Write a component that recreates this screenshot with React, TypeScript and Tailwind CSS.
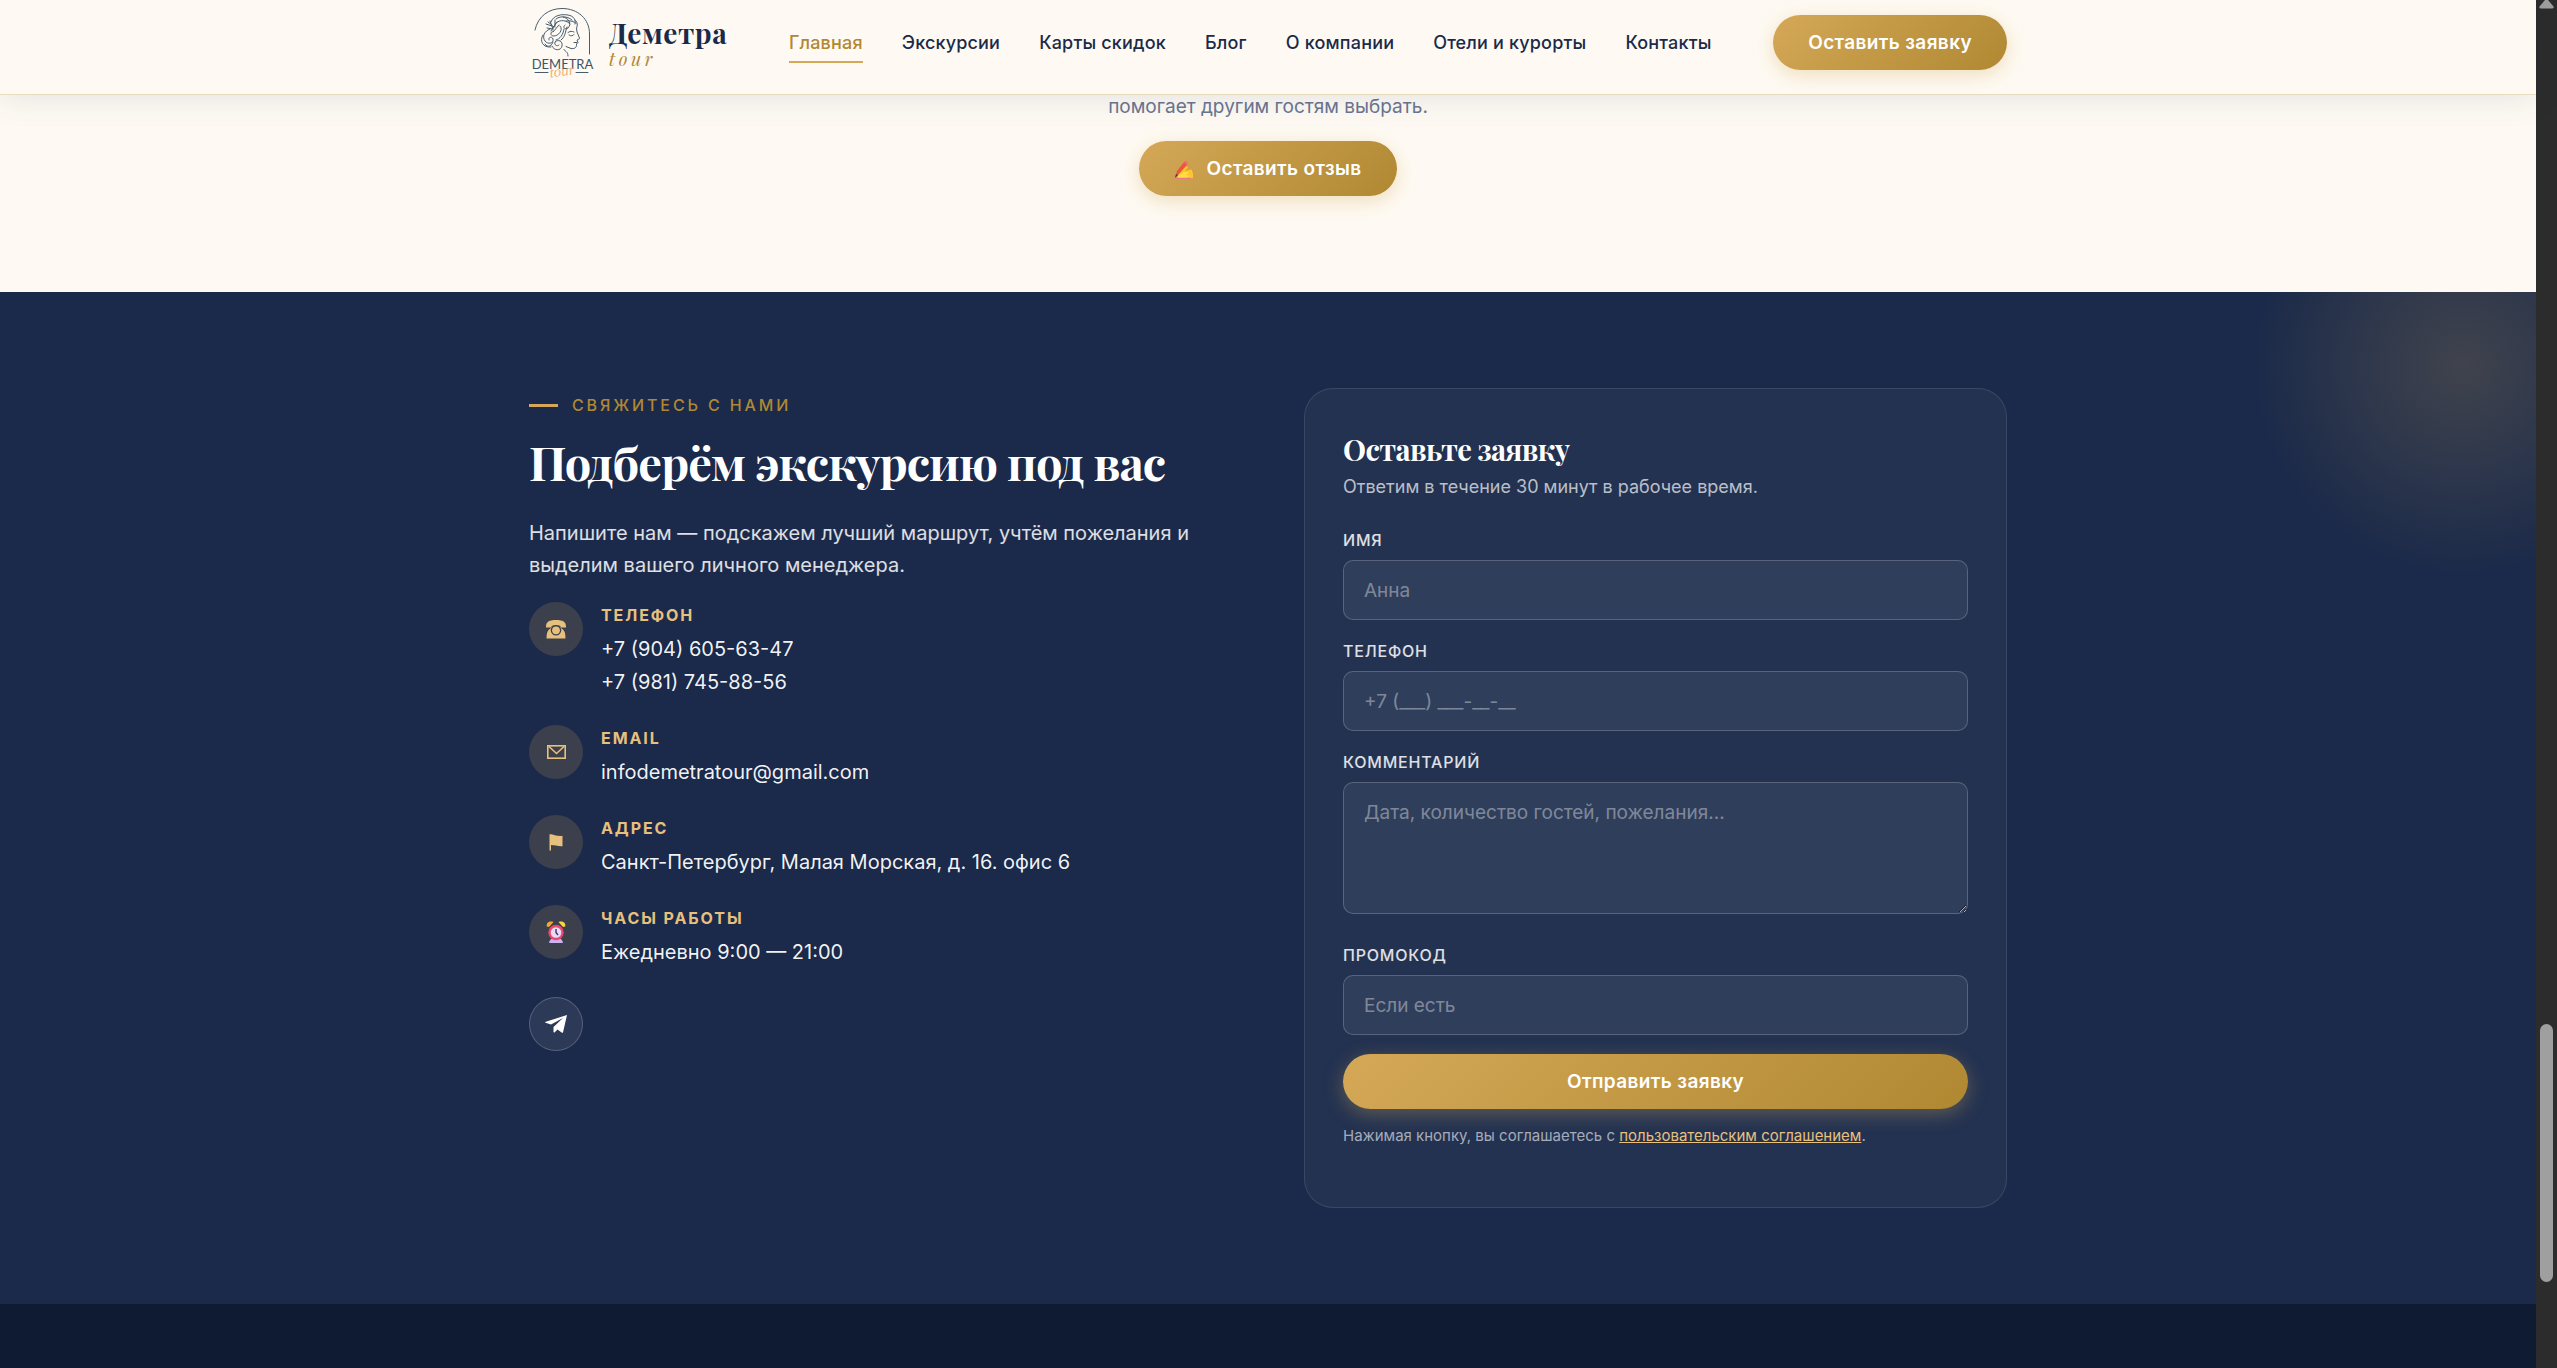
import React from "react";

const SANS = "font-['Inter','Noto_Sans',sans-serif]";
const SERIF = "font-['Playfair_Display','Liberation_Serif',serif]";

const NAV = ["Главная", "Экскурсии", "Карты скидок", "Блог", "О компании", "Отели и курорты", "Контакты"];

const GOLD_BUTTON =
  "inline-flex h-[55px] cursor-pointer items-center justify-center rounded-full bg-[linear-gradient(135deg,#d4a857,#b08832)] px-[35px] pt-0.5 text-[19px] font-semibold tracking-[0.02em] text-white shadow-[0_5px_19px_rgba(212,168,87,0.35)]";

function LogoMark() {
  return (
    <svg viewBox="0 0 64 84" className="h-[84px] w-16" fill="none" stroke="#465d70" strokeLinecap="round" strokeLinejoin="round" strokeWidth="1" aria-hidden="true">
      <path d="M4 30C7 16 18 8.500 31 8.500C47 8.500 58.500 19 58.500 34V54" />
      <path d="M20 22C22 15 31 14 37 15C43 16 45 20 44 24" />
      <path d="M25 19C30 15 38 17 41 20M32 17C38 18 41 24 37 28C34 30 31 27 34 25" />
      <path d="M24 24C29 18 37 21 39 24M35 21C40 20 43 22 45 23" />
      <path d="M44 20C47 22 46.500 26 45.500 28L46 32L48.500 38C48.500 39.500 47 39.500 46 40L47 42.500L45.500 44C46 48 43 49 40 48.500L35 46.500" />
      <path d="M37 32.500C39 31 41 31 43 32M38 35C40 36.500 42 36 43 34.500M43 42.500H46" />
      <path d="M33 49.500C34 52 37 51 37 56" />
      <path d="M19 21L22 29M15 24L24 27M17 22L21 25M26 22L20 31M28 25L22 32M16 28L22 29M24 20L24 26" />
      <path d="M29 26C33 30 27 36 23 36C19 36 19 32 22 31M33 29C32 35 29 39 25 40" />
      <path d="M19 29C13 31 11 37 14 41C17 45 23 43 22 39C21 36 17 37 18 40" />
      <path d="M12 35C8 41 12 48 20 47M21 46C23 51 30 51 31 46C32 41 27 39 24 42C23 45 26 47 28 45" />
      <path d="M14 44C17 49 21 45 22 42M36 27C34 33 34 37 30 40" />
      <text x="31.5" y="69" textAnchor="middle" fontFamily="Lato, sans-serif" fontSize="13" fill="#3d5366" stroke="none">DEMETRA</text>
      <path d="M4 72.500H17M45 72.500H57" />
      <text x="31" y="76" textAnchor="middle" fontFamily="Liberation Serif, serif" fontStyle="italic" fontSize="15" fill="#f4b073" stroke="none" transform="rotate(-8 31 72)">tour</text>
    </svg>
  );
}

function WritingHand() {
  return (
    <svg viewBox="0 0 20 20" className="size-5" aria-hidden="true">
      <path d="M8 9L12 5.500L14 7.500L11 11L17 9.500Q19 10 18 12L19 13V18L13 19L4 18.500L3 16Z" fill="#fcc52c" />
      <path d="M4 16L10 12L15 12L12 15L16 16L12 18L4 18Z" fill="#ffdf3d" />
      <path d="M1 18L3 11L11 1L14 2.500L13 5L4 15Z" fill="#ef5340" />
      <path d="M10 2L12 .5L14 2L13 5Z" fill="#f4707e" />
      <path d="M1 18L2 14L4 15Z" fill="#4a3b3b" />
      <path d="M2 18.500H17" stroke="#e8788a" strokeWidth="1.500" />
    </svg>
  );
}

function PhoneIcon() {
  return (
    <svg viewBox="0 0 22 20" className="h-5 w-[22px]" fill="#e8c07d" aria-hidden="true">
      <path d="M1 7.500C1 3 4 1 11 1S21 3 21 7.500V8.500H15.500V7C14 5.500 8 5.500 6.500 7V8.500H1Z" />
      <path fillRule="evenodd" d="M5.500 9.500C7 7 9 6 11 6S15 7 16.500 9.500Q20.500 11 20.500 19.500H1.500Q1.500 11 5.500 9.500ZM11 6A5.300 5.300 0 1 0 11 16.600A5.300 5.300 0 1 0 11 6Z" />
      <circle cx="11" cy="11.300" r="3.900" />
    </svg>
  );
}

function MailIcon() {
  return (
    <svg viewBox="0 0 19 14" className="h-[14px] w-[19px]" fill="none" stroke="#e8c07d" strokeWidth="1.600" aria-hidden="true">
      <rect x=".8" y=".8" width="17.400" height="12.400" />
      <path d="M2 1.500L9.500 8.500L17 1.500" />
    </svg>
  );
}

function FlagIcon() {
  return (
    <svg viewBox="0 0 14 17" className="h-[17px] w-[14px]" fill="#e8c07d" aria-hidden="true">
      <path d="M.5 .2H2C6 1 9 2.500 13.500 1.800V12.200C9 12.500 6 11 2 11V16.500H.5Z" />
    </svg>
  );
}

function ClockIcon() {
  return (
    <svg viewBox="0 0 20 24" className="h-6 w-5" aria-hidden="true">
      <path d="M3 22L5 19H15L17 22Q17 23 16 23H4Q3 23 3 22Z" fill="#cdb2ee" />
      <path d="M.8 6.500C0 3 3 .5 7.500 2L3 7Z" fill="#f0a83a" />
      <path d="M19.200 6.500C20 3 17 .5 12.500 2L17 7Z" fill="#ffd43a" />
      <circle cx="10" cy="12.500" r="7.700" fill="#f0476d" />
      <circle cx="10" cy="12.500" r="5.300" fill="#e9dcf8" />
      <path d="M10 9V12.500L12 15" stroke="#42345c" strokeWidth="1.400" fill="none" />
    </svg>
  );
}

function TelegramIcon() {
  return (
    <svg viewBox="0 0 22 18" className="h-[18px] w-[22px]" fill="#fff" aria-hidden="true">
      <path d="M22 0L18 17.500Q17.500 18 17 17.700L12.500 14.500L9.500 17.500Q8.500 17.800 8.500 16.500V12L18 3L6 9.500L.5 7.800Q-.3 7 .8 6.700Z" />
    </svg>
  );
}

const CONTACTS = [
  { label: "Телефон", icon: <PhoneIcon />, values: [["+7 (904) 605-63-47", "tel:+79046056347"], ["+7 (981) 745-88-56", "tel:+79817458856"]] },
  { label: "Email", icon: <MailIcon />, values: [["infodemetratour@gmail.com", "mailto:infodemetratour@gmail.com"]] },
  { label: "Адрес", icon: <FlagIcon />, values: [["Санкт-Петербург, Малая Морская, д. 16. офис 6", ""]] },
  { label: "Часы работы", icon: <ClockIcon />, values: [["Ежедневно 9:00 — 21:00", ""]] },
];

const LABEL = "block text-[16px] leading-6 font-medium tracking-[0.05em] text-white/85 uppercase";
const FIELD =
  "mt-2 block w-full rounded-[10px] border border-white/20 bg-white/[0.06] px-5 text-[19px] text-white outline-none placeholder:text-white/40";

function Header() {
  return (
    <header className="relative z-10 h-[95px] border-b border-[#e8dcc0] bg-[#fefaf3] shadow-[0_5px_29px_rgba(27,42,74,0.1)]">
      <div className="mx-auto flex w-full max-w-[1478px] items-start justify-between">
        <a href="#" className="flex items-start gap-[14px] pl-[2px]">
          <LogoMark />
          <span className="flex flex-col pt-[17px]">
            <span className={`${SERIF} text-[28px] leading-8 font-bold tracking-[0.02em] text-[#1b2a4a]`}>Деметра</span>
            <span className={`${SERIF} text-[18px] leading-5 tracking-[0.2em] text-[#b08832] italic`}>tour</span>
          </span>
        </a>
        <nav className="flex gap-[39px] pt-7">
          {NAV.map((item, i) => (
            <a
              key={item}
              href="#"
              className={`border-b-2 pb-1 text-[18px] leading-[29px] font-medium tracking-[0.01em] ${i === 0 ? "border-[#d4a857] text-[#b08832]" : "border-transparent text-[#1b2a4a]"}`}
            >
              {item}
            </a>
          ))}
        </nav>
        <button type="button" className={`${GOLD_BUTTON} mt-[15px]`}>Оставить заявку</button>
      </div>
    </header>
  );
}

function ContactInfo() {
  return (
    <div>
      <div className="flex h-[34px] items-center gap-[14px]">
        <span className="h-[3px] w-[29px] bg-[#d4a857]" />
        <span className="text-[16px] font-medium tracking-[0.18em] text-[#b08832] uppercase">Свяжитесь с нами</span>
      </div>
      <h2 className={`${SERIF} mt-[10px] text-[47px] leading-[60px] font-bold tracking-[-0.02em] text-white`}>Подберём экскурсию под вас</h2>
      <p className="mt-[25px] text-[20px] leading-8 text-white/85">
        Напишите нам — подскажем лучший маршрут, учтём пожелания и выделим вашего личного менеджера.
      </p>
      <ul className="mt-[21px] flex flex-col gap-[26px]">
        {CONTACTS.map((c) => (
          <li key={c.label} className="flex gap-[18px]">
            <span className="flex size-[54px] shrink-0 items-center justify-center rounded-full bg-[#d4a857]/18">{c.icon}</span>
            <div>
              <div className="text-[16px] leading-[26px] font-bold tracking-[0.12em] text-[#e8c07d] uppercase">{c.label}</div>
              <div className="mt-[5px] text-[20px] leading-[33px] text-white/95">
                {c.values.map(([text, href]) => (
                  <div key={text}>{href ? <a href={href}>{text}</a> : text}</div>
                ))}
              </div>
            </div>
          </li>
        ))}
      </ul>
      <a
        href="#"
        aria-label="Telegram"
        className="mt-7 flex size-[54px] items-center justify-center rounded-full border border-white/20 bg-white/[0.08]"
      >
        <TelegramIcon />
      </a>
    </div>
  );
}

function RequestForm() {
  return (
    <form className="rounded-[29px] border border-white/10 bg-white/[0.04] px-[38px] pt-[38px] pb-[59px]">
      <h3 className={`${SERIF} text-[29px] leading-[44px] font-bold tracking-[-0.02em] text-white`}>Оставьте заявку</h3>
      <p className="mt-0.5 text-[18px] leading-7 text-white/70">Ответим в течение 30 минут в рабочее время.</p>
      <label htmlFor="name" className={`${LABEL} mt-[27px]`}>Имя</label>
      <input id="name" placeholder="Анна" className={`${FIELD} h-[60px]`} />
      <label htmlFor="phone" className={`${LABEL} mt-[19px]`}>Телефон</label>
      <input id="phone" type="tel" placeholder="+7 (___) ___-__-__" className={`${FIELD} h-[60px]`} />
      <label htmlFor="comment" className={`${LABEL} mt-[19px]`}>Комментарий</label>
      <textarea id="comment" placeholder="Дата, количество гостей, пожелания..." className={`${FIELD} h-[132px] resize-y py-[15px] leading-[29px]`} />
      <label htmlFor="promo" className={`${LABEL} mt-[29px]`}>Промокод</label>
      <input id="promo" placeholder="Если есть" className={`${FIELD} h-[60px]`} />
      <button type="submit" className={`${GOLD_BUTTON} mt-[19px] w-full`}>Отправить заявку</button>
      <p className="mt-[15px] text-[15px] leading-6 text-white/60">
        Нажимая кнопку, вы соглашаетесь с{" "}
        <a href="#" className="text-[#e8c07d] underline">пользовательским соглашением</a>.
      </p>
    </form>
  );
}

function Scrollbar() {
  return (
    <div className="flex w-[21px] shrink-0 flex-col items-center bg-[#2c2c2c]" aria-hidden="true">
      <svg viewBox="0 0 15 9" className="h-[9px] w-[15px]" fill="#9f9f9f">
        <path d="M6 0H9L14.500 6.500Q15 8.500 13 8.500H2Q0 8.500 .5 6.500Z" />
      </svg>
      <div className="flex-1" />
      <div className="mb-[86px] h-[258px] w-[13px] rounded-full bg-[#9f9f9f]" />
    </div>
  );
}

export default function App() {
  return (
    <div className={`${SANS} flex min-h-screen`}>
      <div className="flex min-w-0 flex-1 flex-col bg-[#0f1a33]">
        <Header />
        <section className="flex flex-col items-center bg-[#fefaf3] pb-24">
          <p className="text-[19px] leading-6 text-[#6b7591]">помогает другим гостям выбрать.</p>
          <button type="button" className={`${GOLD_BUTTON} mt-[22px] gap-3`}>
            <WritingHand />
            Оставить отзыв
          </button>
        </section>
        <section className="relative overflow-hidden bg-[#1b2a4a] py-24">
          <div className="absolute -top-[137px] -right-[137px] size-[420px] bg-[radial-gradient(closest-side,rgba(212,168,87,0.2),transparent)]" />
          <div className="relative mx-auto grid w-full max-w-[1478px] grid-cols-2 gap-[72px]">
            <ContactInfo />
            <RequestForm />
          </div>
        </section>
        <footer className="flex-1" />
      </div>
      <Scrollbar />
    </div>
  );
}
